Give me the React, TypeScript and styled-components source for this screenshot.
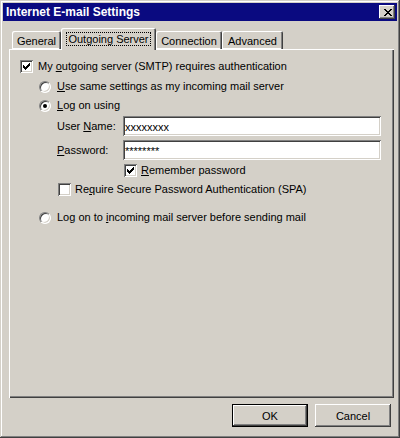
import styled, {createGlobalStyle} from "styled-components";

const GlobalStyle = createGlobalStyle`
    html, body {
        margin: 0;
        padding: 0;
        background: #d4d0c8;
    }
    body {
        font-family: "Liberation Sans", Arial, sans-serif;
        font-size: 11px;
        color: #000;
    }
`;

const tabs = [
    {label: "General", width: 49},
    {label: "Outgoing Server", width: 95, active: true},
    {label: "Connection", width: 66},
    {label: "Advanced", width: 61},
];

function CheckMark() {
    return (
        <svg width="7" height="7" viewBox="0 0 7 7" shapeRendering="crispEdges">
            <path d="M6 0h1v3h-1v1h-1v1h-1v1h-1v1h-1v-1h-1v-1h-1v-3h1v1h1v1h1v-1h1v-1h1z" fill="#000"/>
        </svg>
    );
}

function CloseGlyph() {
    return (
        <svg width="8" height="7" viewBox="0 0 8 7" shapeRendering="crispEdges">
            <path
                d="M0 0h2v1h1v1h2v-1h1v-1h2v1h-1v1h-1v1h-1v1h1v1h1v1h1v1h-2v-1h-1v-1h-2v1h-1v1h-2v-1h1v-1h1v-1h1v-1h-1v-1h-1v-1h-1z"
                fill="#000"
            />
        </svg>
    );
}

function Check({checked}: {checked?: boolean}) {
    return <CheckBox>{checked && <CheckMark/>}</CheckBox>;
}

function Radio({checked}: {checked?: boolean}) {
    return <RadioBox>{checked && <RadioDot/>}</RadioBox>;
}

export default function App() {
    return (
        <>
            <GlobalStyle/>
            <Window>
                <TitleBar>
                    <Title>Internet E-mail Settings</Title>
                    <CloseButton><CloseGlyph/></CloseButton>
                </TitleBar>
                <Body>
                    <TabStrip>
                        {tabs.map((t) => (
                            <Tab key={t.label} $w={t.width} $active={!!t.active}>
                                {t.active ? <Focus>{t.label}</Focus> : t.label}
                            </Tab>
                        ))}
                    </TabStrip>
                    <Panel>
                        <Row $top={0} $indent={0}>
                            <Check checked/>
                            <Label>My <u>o</u>utgoing server (SMTP) requires authentication</Label>
                        </Row>
                        <Row $top={7} $indent={19}>
                            <Radio/>
                            <Label $gap={6}><u>U</u>se same settings as my incoming mail server</Label>
                        </Row>
                        <Row $top={6} $indent={19}>
                            <Radio checked/>
                            <Label $gap={6}><u>L</u>og on using</Label>
                        </Row>
                        <FieldRow $top={4}>
                            <FieldLabel>User <u>N</u>ame:</FieldLabel>
                            <TextBox readOnly value="xxxxxxxx"/>
                        </FieldRow>
                        <FieldRow $top={4}>
                            <FieldLabel><u>P</u>assword:</FieldLabel>
                            <TextBox readOnly value="********"/>
                        </FieldRow>
                        <Row $top={4} $indent={104}>
                            <Check checked/>
                            <Label $gap={4}><u>R</u>emember password</Label>
                        </Row>
                        <Row $top={6} $indent={38}>
                            <Check/>
                            <Label $gap={4}>Re<u>q</u>uire Secure Password Authentication (SPA)</Label>
                        </Row>
                        <Row $top={15} $indent={19}>
                            <Radio/>
                            <Label $gap={6}>Log on to <u>i</u>ncoming mail server before sending mail</Label>
                        </Row>
                    </Panel>
                    <ButtonRow>
                        <Button $default>OK</Button>
                        <Button>Cancel</Button>
                    </ButtonRow>
                </Body>
            </Window>
        </>
    );
}

const Window = styled.div`
    display: flex;
    flex-direction: column;
    box-sizing: border-box;
    width: 400px;
    height: 438px;
    padding: 3px;
    background: #d4d0c8;
    box-shadow: inset -1px -1px #404040, inset 1px 1px #d4d0c8,
        inset -2px -2px #808080, inset 2px 2px #ffffff;
`;

const TitleBar = styled.div`
    display: flex;
    align-items: center;
    justify-content: space-between;
    height: 18px;
    padding: 0 2px 0 3px;
    background: #0a0a80;
`;

const Title = styled.span`
    color: #fff;
    font-weight: bold;
    font-size: 12px;
    font-family: "Liberation Sans", Arial, sans-serif;
`;

const CloseButton = styled.div`
    display: flex;
    align-items: center;
    justify-content: center;
    box-sizing: border-box;
    width: 16px;
    height: 14px;
    padding-left: 1px;
    background: #d4d0c8;
    box-shadow: inset -1px -1px #404040, inset 1px 1px #ffffff,
        inset -2px -2px #808080, inset 2px 2px #d4d0c8;
`;

const Body = styled.div`
    display: flex;
    flex-direction: column;
    flex: 1;
    padding: 8px 3px 8px 6px;
`;

const TabStrip = styled.div`
    display: flex;
    align-items: flex-end;
    height: 21px;
    padding-left: 3px;
    position: relative;
    z-index: 1;
    margin-bottom: -1px;
`;

const Tab = styled.div<{ $w: number; $active: boolean }>`
    display: flex;
    align-items: center;
    justify-content: center;
    box-sizing: border-box;
    width: ${(p) => p.$w}px;
    height: ${(p) => (p.$active ? 22 : 18)}px;
    padding-top: ${(p) => (p.$active ? 0 : 1)}px;
    margin-bottom: ${(p) => (p.$active ? 0 : 1)}px;
    background: #d4d0c8;
    border-radius: 2px 2px 0 0;
    box-shadow: ${(p) => (p.$active
        ? "inset 1px 1px #ffffff, inset -1px 0 #404040, inset -2px 0 #808080"
        : "inset 1px 1px #ffffff, inset -1px 0 #404040, inset -2px 0 #808080, inset 0 -1px #ffffff")};
`;

const Focus = styled.span`
    padding: 0 1px;
    margin-top: -1px;
    outline: 1px dotted #000;
    outline-offset: 0;
`;

const Panel = styled.div`
    display: flex;
    flex-direction: column;
    flex: 1;
    padding: 11px 11px 0 11px;
    background: #d4d0c8;
    box-shadow: inset 1px 1px #ffffff, inset -1px -1px #404040, inset -2px -2px #808080;
`;

const Row = styled.div<{ $top: number; $indent: number }>`
    display: flex;
    align-items: center;
    height: 13px;
    margin-top: ${(p) => p.$top}px;
    margin-left: ${(p) => p.$indent}px;
    white-space: nowrap;
`;

const Label = styled.span<{ $gap?: number }>`
    margin-left: ${(p) => p.$gap ?? 5}px;
    line-height: 13px;
`;

const CheckBox = styled.span`
    display: flex;
    align-items: center;
    justify-content: center;
    box-sizing: border-box;
    flex: none;
    width: 13px;
    height: 13px;
    background: #fff;
    box-shadow: inset 1px 1px #808080, inset -1px -1px #ffffff,
        inset 2px 2px #404040, inset -2px -2px #d4d0c8;
`;

const RadioBox = styled.span`
    display: flex;
    align-items: center;
    justify-content: center;
    box-sizing: border-box;
    flex: none;
    width: 12px;
    height: 12px;
    border-radius: 50%;
    border: 1px solid;
    border-color: #808080 #ffffff #ffffff #808080;
    background: #fff;
    box-shadow: inset 1px 1px #404040, inset -1px -1px #d4d0c8;
`;

const RadioDot = styled.span`
    width: 4px;
    height: 4px;
    border-radius: 50%;
    background: #000;
`;

const FieldRow = styled.div<{ $top: number }>`
    display: flex;
    align-items: center;
    margin-top: ${(p) => p.$top}px;
    margin-left: 37px;
`;

const FieldLabel = styled.span`
    width: 66px;
    flex: none;
`;

const TextBox = styled.input`
    box-sizing: border-box;
    width: 258px;
    height: 20px;
    margin: 0;
    padding: 2px 2px 0;
    border: none;
    outline: none;
    background: #fff;
    font-family: "Liberation Sans", Arial, sans-serif;
    font-size: 11px;
    color: #000;
    box-shadow: inset 1px 1px #808080, inset -1px -1px #ffffff,
        inset 2px 2px #404040, inset -2px -2px #d4d0c8;
`;

const ButtonRow = styled.div`
    display: flex;
    justify-content: flex-end;
    gap: 7px;
    margin-top: 6px;
    padding-right: 3px;
`;

const Button = styled.div<{ $default?: boolean }>`
    display: flex;
    align-items: center;
    justify-content: center;
    box-sizing: border-box;
    width: 76px;
    height: 23px;
    background: #d4d0c8;
    box-shadow: ${(p) => (p.$default
        ? "inset 0 0 0 1px #000, inset -2px -2px #404040, inset 2px 2px #ffffff, inset -3px -3px #808080"
        : "inset -1px -1px #404040, inset 1px 1px #ffffff, inset -2px -2px #808080")};
`;
